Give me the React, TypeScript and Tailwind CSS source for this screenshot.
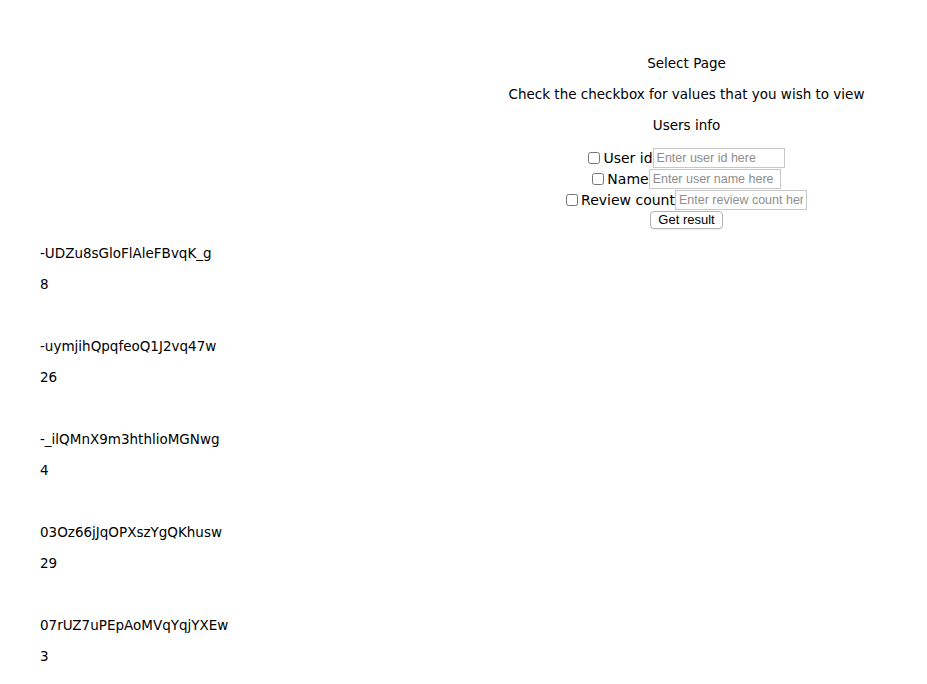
import React from 'react';

const users = [
  { id: '-UDZu8sGloFlAleFBvqK_g', count: 8 },
  { id: '-uymjihQpqfeoQ1J2vq47w', count: 26 },
  { id: '-_ilQMnX9m3hthlioMGNwg', count: 4 },
  { id: '03Oz66jJqOPXszYgQKhusw', count: 29 },
  { id: '07rUZ7uPEpAoMVqYqjYXEw', count: 3 },
];

function Field({ label, placeholder }: { label: string; placeholder: string }) {
  return (
    <div className="flex items-center justify-center h-[21px]">
      <input type="checkbox" className="w-[12px] h-[12px] mr-[3px] accent-gray-400" />
      <span className="text-[14px] leading-[20px] text-black">{label}</span>
      <input
        type="text"
        placeholder={placeholder}
        className="w-[132px] h-[20px] border border-[#c8c8c8] px-[3px] text-[12.5px] font-['Liberation_Sans',sans-serif] placeholder:text-[#8e8e8e] outline-none"
      />
    </div>
  );
}

export default function App() {
  return (
    <div className="min-h-[684px] bg-white font-['DejaVu_Sans',sans-serif] text-[13.5px] text-black overflow-hidden">
      {/* Header and form */}
      <div className="pl-[446px] pt-[55px] text-center">
        <p className="leading-[17px]">Select Page</p>
        <p className="leading-[17px] mt-[14px]">Check the checkbox for values that you wish to view</p>
        <p className="leading-[17px] mt-[14px]">Users info</p>
        <div className="mt-[13px] flex flex-col">
          <Field label="User id" placeholder="Enter user id here" />
          <Field label="Name" placeholder="Enter user name here" />
          <Field label="Review count" placeholder="Enter review count here" />
          <div className="flex justify-center mt-[1px]">
            <button className="h-[18px] px-[7px] border border-[#b4b4b4] rounded-[4px] bg-white text-[13px] leading-[16px] font-['Liberation_Sans',sans-serif] shadow-[0_1px_1px_rgba(0,0,0,0.08)]">
              Get result
            </button>
          </div>
        </div>
      </div>

      {/* Results */}
      <div className="pl-[40px] mt-[16px]">
        {users.map((u) => (
          <div key={u.id} className="pb-[45px]">
            <p className="leading-[17px]">{u.id}</p>
            <p className="leading-[17px] mt-[14px]">{u.count}</p>
          </div>
        ))}
      </div>
    </div>
  );
}
